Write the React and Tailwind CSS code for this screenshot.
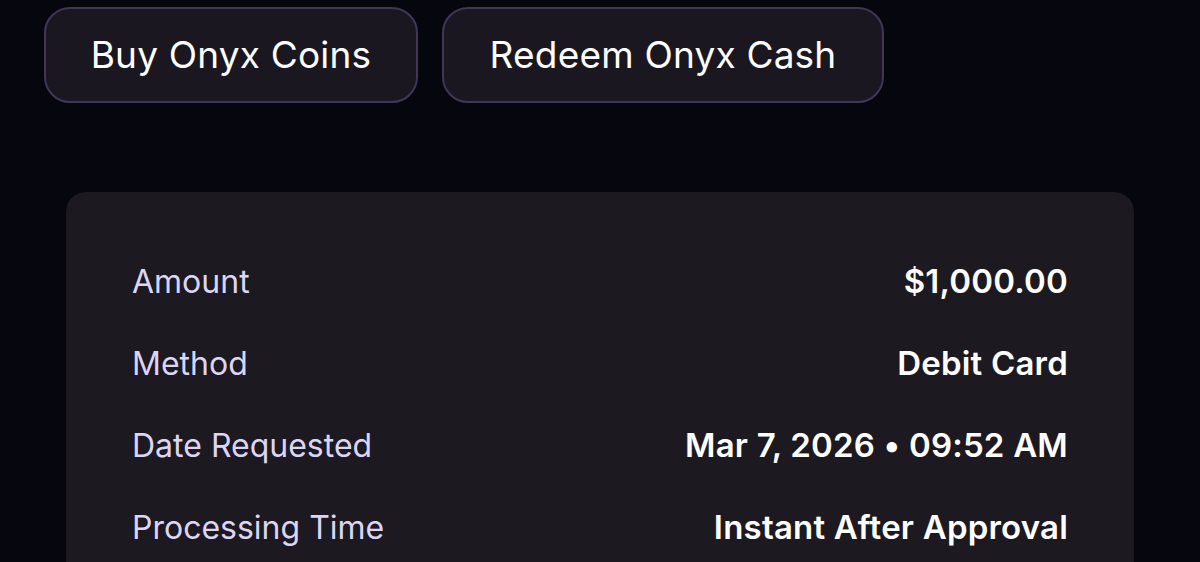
export default function App() {
  const rows = [
    { label: 'Amount', value: '$1,000.00' },
    { label: 'Method', value: 'Debit Card' },
    { label: 'Date Requested', value: 'Mar 7, 2026 • 09:52 AM' },
    { label: 'Processing Time', value: 'Instant After Approval' },
  ];

  return (
    <div className="h-[562px] w-[1200px] overflow-hidden bg-[#05060e] font-['Inter',sans-serif]">
      {/* Tabs */}
      <div className="flex gap-[24px] pl-[44px] pt-[7px]">
        <button className="h-[96px] w-[374px] rounded-[26px] border-2 border-[#41355a] bg-[#1a1720] text-[37px] font-normal tracking-[0.2px] text-white">
          Buy Onyx Coins
        </button>
        <button className="h-[96px] w-[442px] rounded-[26px] border-2 border-[#41355a] bg-[#1a1720] text-[37px] font-normal tracking-[0.2px] text-white">
          Redeem Onyx Cash
        </button>
      </div>

      {/* Details card */}
      <div className="mx-[66px] mt-[89px] rounded-[20px] bg-[#1c1920] px-[66px] pt-[49px] pb-[40px]">
        {rows.map((row) => (
          <div key={row.label} className="flex h-[82px] items-center justify-between">
            <span className="text-[32px] text-[#dcd6f4]">{row.label}</span>
            <span className="text-[33px] font-semibold tracking-[0.2px] text-white">{row.value}</span>
          </div>
        ))}
      </div>
    </div>
  );
}
